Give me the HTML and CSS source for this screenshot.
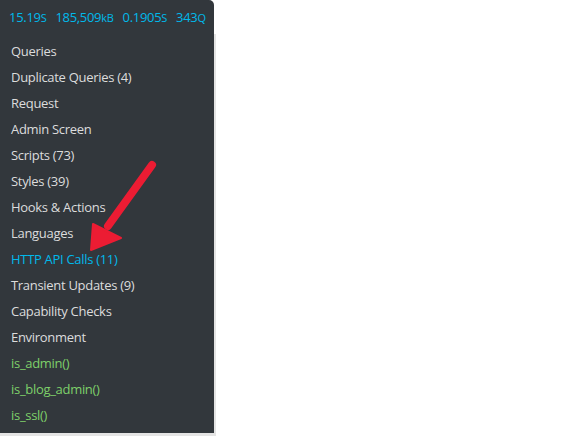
FILE: index.html
```html
<!DOCTYPE html>
<html>
<head>
<meta charset="utf-8">
<link rel="stylesheet" href="styles.css">
</head>
<body>
<div class="qm">
  <div class="bar">
    <span>15.19<small>s</small></span>
    <span>185,509<small>kB</small></span>
    <span>0.1905<small>s</small></span>
    <span>343<small>Q</small></span>
  </div>
  <ul class="menu">
    <li>Queries</li>
    <li>Duplicate Queries (4)</li>
    <li>Request</li>
    <li>Admin Screen</li>
    <li>Scripts (73)</li>
    <li>Styles (39)</li>
    <li>Hooks &amp; Actions</li>
    <li>Languages</li>
    <li class="active">HTTP API Calls (11)</li>
    <li>Transient Updates (9)</li>
    <li>Capability Checks</li>
    <li>Environment</li>
    <li class="cond">is_admin()</li>
    <li class="cond">is_blog_admin()</li>
    <li class="cond">is_ssl()</li>
  </ul>
  <svg class="arrow" width="80" height="110" viewBox="0 0 80 110">
    <path d="M72 15 L28 76" stroke="#ec1c33" stroke-width="8" stroke-linecap="round" fill="none"/>
    <path d="M11 100 L13 74 L41 88 Z" fill="#ec1c33" stroke="#ec1c33" stroke-width="2" stroke-linejoin="round"/>
  </svg>
</div>
</body>
</html>
```
FILE: styles.css
```css
html, body {
  margin: 0;
  padding: 0;
  background: #ffffff;
}
.qm {
  position: relative;
  width: 216px;
  font-family: "Open Sans", "Noto Sans", sans-serif;
  font-size: 13px;
}
.bar {
  width: 214px;
  height: 34px;
  background: #32373c;
  border-top-right-radius: 5px;
  display: flex;
  align-items: center;
  gap: 9px;
  padding-left: 9px;
  box-sizing: border-box;
  color: #00b9eb;
  letter-spacing: -0.3px;
  white-space: nowrap;
}
.bar small {
  font-size: 11px;
  text-transform: uppercase;
}
.bar span:nth-child(2) small {
  text-transform: none;
}
.menu {
  list-style: none;
  margin: 0;
  padding: 4px 0 5px 0;
  width: 214px;
  background: #32373c;
  border-right: 2px solid #e4e4e4;
  border-bottom: 3px solid #e4e4e4;
  color: #dcdcdc;
}
.menu li {
  height: 26px;
  line-height: 26px;
  padding-left: 11px;
  letter-spacing: -0.3px;
}
.menu li.active {
  color: #00b9eb;
}
.menu li.cond {
  color: #7ed06a;
}
.arrow {
  position: absolute;
  left: 80px;
  top: 150px;
}
```
